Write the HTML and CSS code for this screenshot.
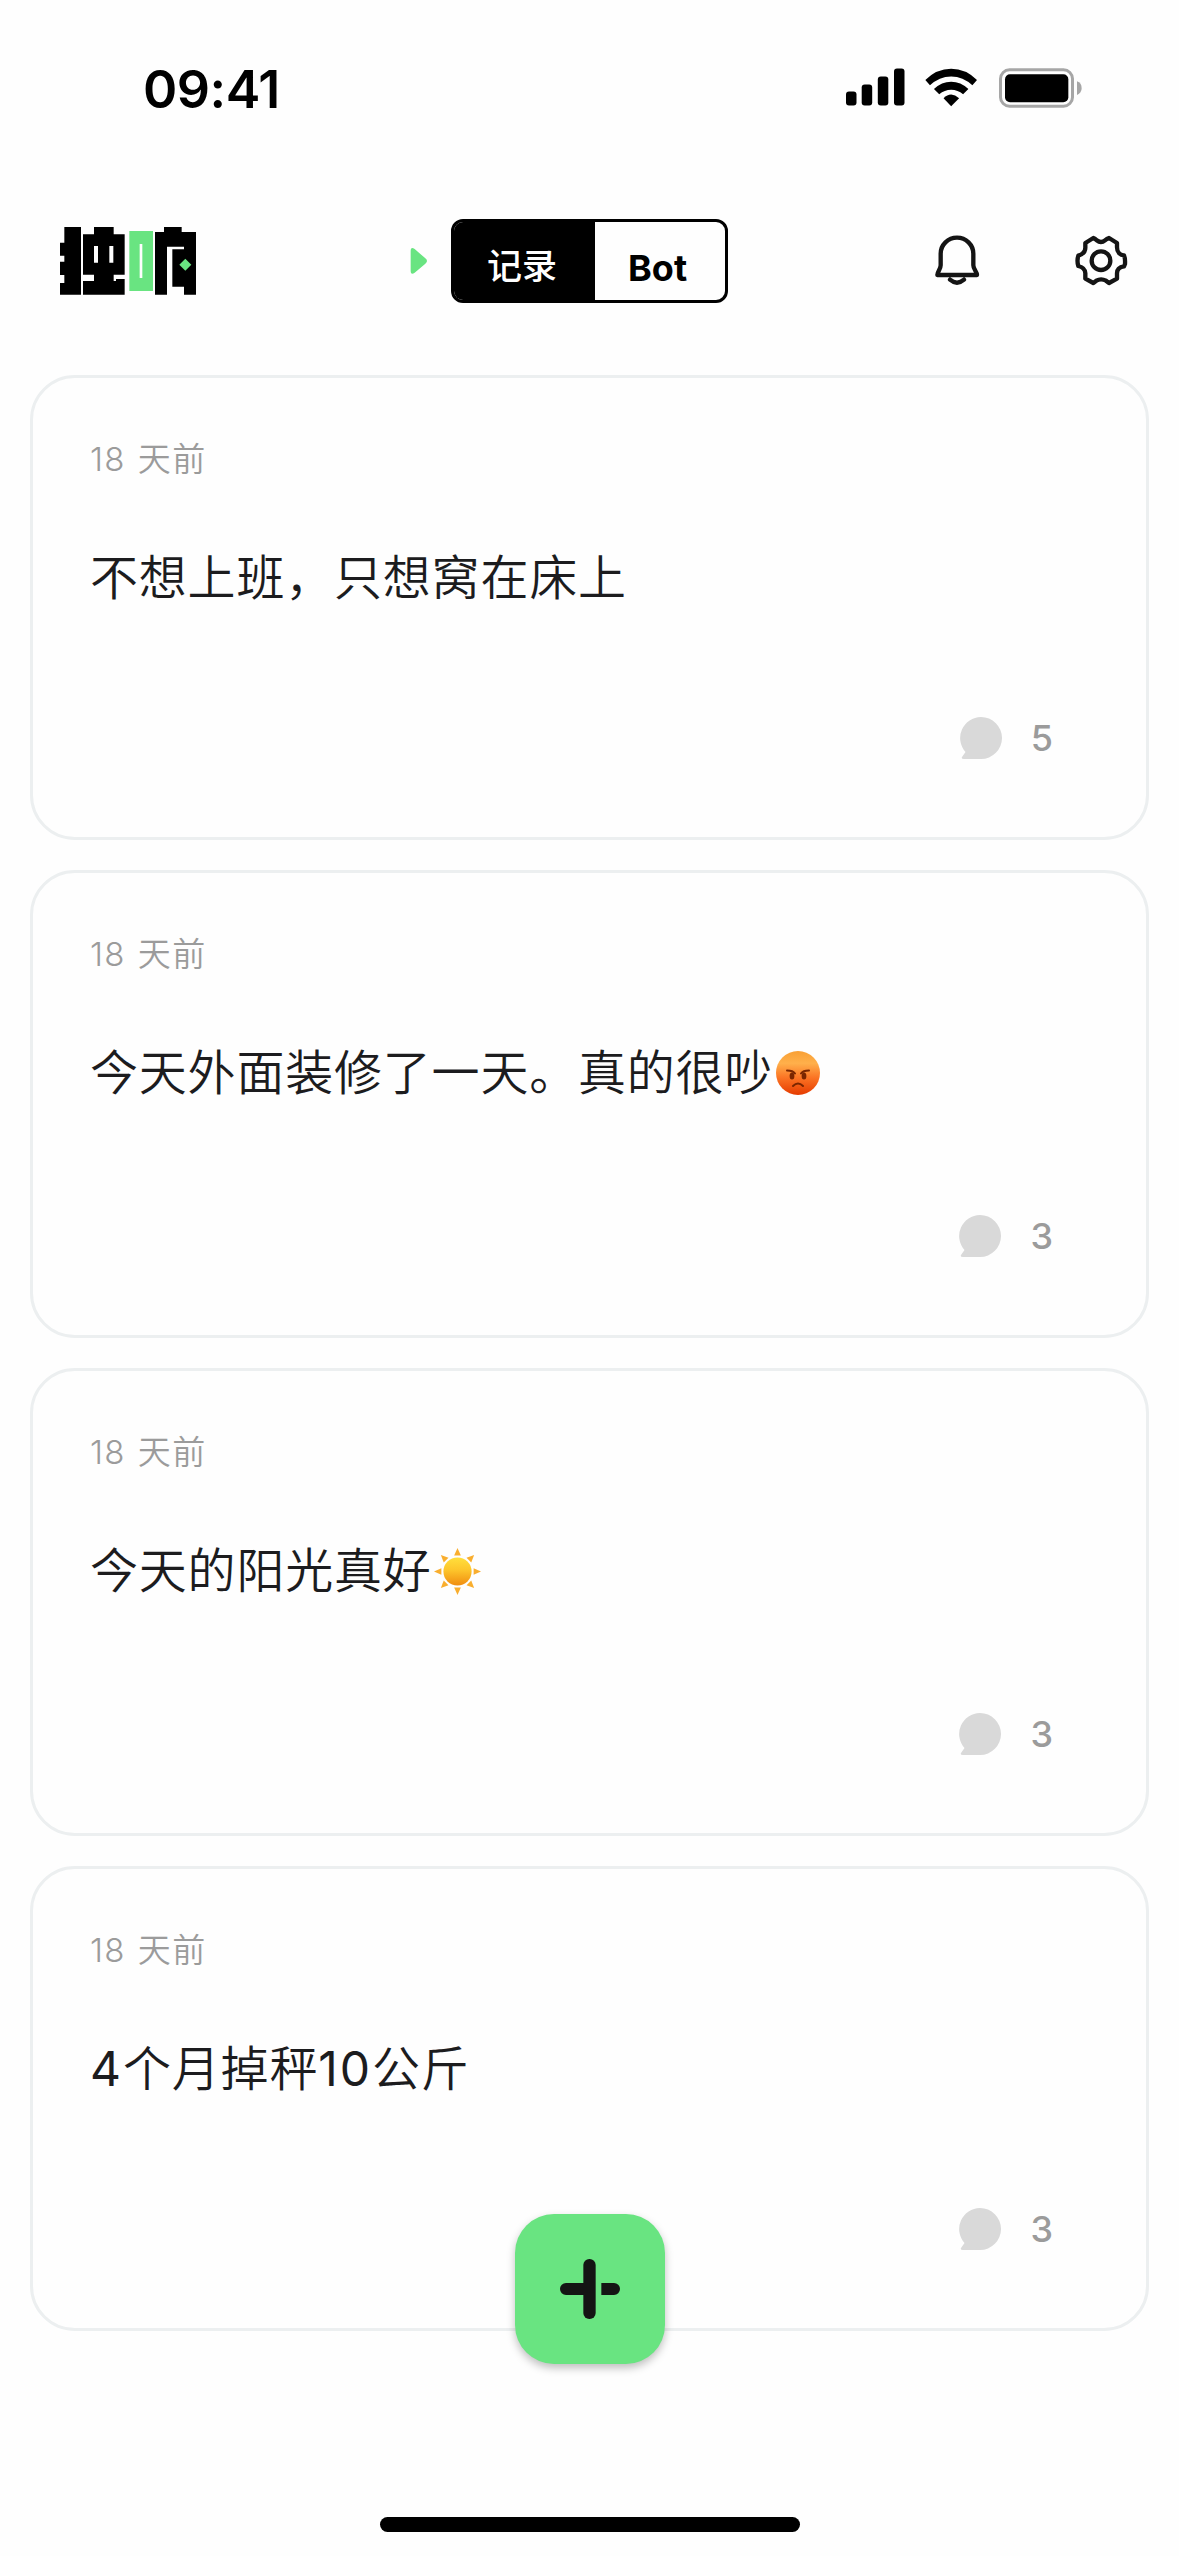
FILE: index.html
```html
<!DOCTYPE html>
<html lang="zh-CN">
<head>
<meta charset="utf-8">
<title>独响</title>
<link rel="stylesheet" href="styles.css">
</head>
<body>
<div class="screen">
  <div class="status">
    <span class="time">09:41</span>
    <svg class="signal" viewBox="0 0 59 38"><rect x="0" y="23.5" width="10.5" height="14" rx="3"/><rect x="15.7" y="16.5" width="10.5" height="21" rx="3"/><rect x="31.8" y="8.5" width="10.5" height="29" rx="3"/><rect x="48" y="0.5" width="10.5" height="37" rx="3"/></svg>
    <svg class="wifi" viewBox="315 84 157 117"><path d="M316 120Q350 86 394 86T472 120L458 136Q430 109 394 109T330 136Z"/><path d="M342 147Q365 125 394 125T446 147L430 163Q414 149 394 149T358 163Z"/><path d="M371 175Q382 164 394 164T418 175L394 199Z"/></svg>
    <svg class="battery" viewBox="537 82 249 120"><rect x="541.5" y="87.500" width="216" height="109" rx="27" fill="none" stroke="#a6a6a6" stroke-width="9"/><rect x="555" y="101" width="190" height="84" rx="15"/><path d="M771 122Q785 127 785 142T771 163Z" fill="#a6a6a6"/></svg>
  </div>
  <header class="topbar">
    <svg class="logo" viewBox="60 48 411 210">
      <path d="M73 51H123V254H60V219H73V195H60V155H73V137H60V98H73Z"/>
      <path fill-rule="evenodd" d="M162 51H221V73H254V194H221V213H228V207H254V254H129V213H162V194H129V73H162ZM162 108V158H174V108ZM208 108V158H220V108Z"/>
      <path class="mint" fill-rule="evenodd" d="M268 63H339V243H268ZM299 102V204H307V102Z"/>
      <path d="M372 51H425V66H468V254H432V230H397V118H432V110H381V254H345V66H372Z"/>
      <path class="mint" d="M436 146L454 164L436 182L418 164Z"/>
    </svg>
    <svg class="arrow mint" viewBox="60 138 54 90"><path d="M62 153Q62 139 74 147L106 175Q116 183 106 191L74 218Q62 226 62 212Z"/></svg>
    <div class="tabs"><span class="tab active">记录</span><span class="tab">Bot</span></div>
    <svg class="bell" viewBox="100 72 144 162"><path d="M123 166V131A49 48 0 0 1 221 131V166C221 178 232 185 232 195H113C113 185 123 178 123 166ZM151 209Q172 227 193 209"/></svg>
    <svg class="gear" viewBox="521 72 162 162"><path d="M579 84Q584 86 589 91Q602 101 614 91Q620 86 626 84L650 99V112C650 128 660 136 671 136Q675 145 674 162L671 169C656 171 650 179 650 190V206L626 219L617 212Q602 204 588 212L579 219L555 206V190C555 178 546 171 534 168Q529 152 534 137C549 132 555 125 555 113V99Z"/><circle cx="602" cy="152" r="28"/></svg>
  </header>
  <main class="feed">
    <article class="card">
      <time class="date">18 天前</time>
      <p class="text">不想上班，只想窝在床上</p>
      <div class="comments"><svg class="bubble" viewBox="0 0 42 42"><path d="M21 0A21 21 0 0 1 21 42H4Q1 42 2 40L5.500 35A21 21 0 0 1 21 0Z"/></svg><span>5</span></div>
    </article>
    <article class="card tall">
      <time class="date">18 天前</time>
      <p class="text">今天外面装修了一天。真的很吵<svg class="emoji angry" viewBox="0 0 44 44"><defs><linearGradient id="face" x1="0" y1="0" x2="0" y2="1"><stop offset="0" stop-color="#f9a035"/><stop offset=".28" stop-color="#ffb04b"/><stop offset=".6" stop-color="#fb7525"/><stop offset="1" stop-color="#e53b00"/></linearGradient></defs><circle cx="22" cy="22" r="22" fill="url(#face)"/><g fill="#7a2600"><ellipse cx="16" cy="25" rx="2.400" ry="3.500"/><ellipse cx="28" cy="25" rx="2.400" ry="3.500"/></g><path d="M11 19.500Q17 19.500 19 22.500M33 19.500Q27 19.500 25 22.500M17 35Q22 30 27 35" fill="none" stroke="#7a2600" stroke-width="2" stroke-linecap="round"/></svg></p>
      <div class="comments"><svg class="bubble" viewBox="0 0 42 42"><path d="M21 0A21 21 0 0 1 21 42H4Q1 42 2 40L5.500 35A21 21 0 0 1 21 0Z"/></svg><span>3</span></div>
    </article>
    <article class="card tall">
      <time class="date">18 天前</time>
      <p class="text">今天的阳光真好<svg class="emoji sun" viewBox="-70 -70 140 140"><defs><linearGradient id="sun" x1="0" y1="0" x2="0" y2="1"><stop offset="0" stop-color="#ffdf3d"/><stop offset=".45" stop-color="#fdc52b"/><stop offset="1" stop-color="#f08c10"/></linearGradient></defs><circle r="42" fill="url(#sun)"/><g fill="#f9ae2e"><path id="ray" d="M-10-48L0-70L10-48Z"/><use href="#ray" transform="rotate(45)"/><use href="#ray" transform="rotate(90)"/><use href="#ray" transform="rotate(135)"/><use href="#ray" transform="rotate(180)"/><use href="#ray" transform="rotate(225)"/><use href="#ray" transform="rotate(270)"/><use href="#ray" transform="rotate(315)"/></g></svg></p>
      <div class="comments"><svg class="bubble" viewBox="0 0 42 42"><path d="M21 0A21 21 0 0 1 21 42H4Q1 42 2 40L5.500 35A21 21 0 0 1 21 0Z"/></svg><span>3</span></div>
    </article>
    <article class="card">
      <time class="date">18 天前</time>
      <p class="text"><span class="num">4</span>个月掉秤<span class="num">10</span>公斤</p>
      <div class="comments"><svg class="bubble" viewBox="0 0 42 42"><path d="M21 0A21 21 0 0 1 21 42H4Q1 42 2 40L5.500 35A21 21 0 0 1 21 0Z"/></svg><span>3</span></div>
    </article>
  </main>
  <button class="add" aria-label="新建"><svg viewBox="0 0 180 180"><rect x="70" y="0" width="37" height="180" rx="18"/><path d="M18 72H75V108H18A18 18 0 0 1 18 72ZM124 72H162A18 18 0 0 1 162 108H124Z"/></svg></button>
  <div class="home"></div>
</div>
</body>
</html>
```
FILE: styles.css
```css
* { box-sizing: border-box; }
body { margin: 0; background: #fff; }
.screen {
  position: relative;
  display: flex;
  flex-direction: column;
  width: 1179px;
  height: 2556px;
  overflow: hidden;
  background: #fefefe;
  color: #1c1c1e;
  font-family: Inter, "Noto Sans CJK SC", sans-serif;
}
svg { display: block; }
.status {
  display: grid;
  grid-template-columns: 703px 79px 74px 83px;
  padding: 68px 0 0 143px;
  height: 219px;
  align-items: start;
}
.time { font-size: 52px; line-height: 43px; font-weight: 600; color: #000; letter-spacing: -0.5px; }
.signal { width: 59px; height: 38px; }
.wifi { width: 52px; height: 39px; }
.battery { width: 83px; height: 40px; }
.topbar {
  display: grid;
  grid-template-columns: 350px 41px 482px 141px auto;
  align-items: center;
  height: 84px;
  padding-left: 60px;
}
.logo { width: 137px; height: 70px; }
.mint { fill: #69e481; }
.arrow { width: 18px; height: 30px; }
.tabs {
  display: flex;
  width: 277px;
  height: 84px;
  border: 3px solid #000;
  border-radius: 12px;
  overflow: hidden;
  color: #000;
  font-size: 36px;
  font-weight: 700;
  line-height: 92px;
}
.tab { flex: 1; padding-left: 33px; }
.tab.active { flex: 0 0 141px; background: #000; color: #fff; font-size: 35px; font-weight: 500; line-height: 88px; }
.bell { width: 48px; height: 54px; }
.gear { width: 54px; height: 54px; }
.bell, .gear { fill: none; stroke: #141414; stroke-width: 13; stroke-linejoin: round; stroke-linecap: round; }
.feed {
  display: flex;
  flex-direction: column;
  gap: 30px;
  padding: 72px 30px 0;
}
.card {
  display: flex;
  flex-direction: column;
  height: 465px;
  padding: 57px 57px 78px;
  border: 3px solid #eceff0;
  border-radius: 45px;
}
.card.tall { height: 468px; }
.date { font-size: 33px; line-height: 48px; font-weight: 350; color: #9b9b9b; letter-spacing: 1.3px; word-spacing: 1.5px; }
.text {
  display: flex;
  align-items: center;
  margin: 59px 0 0;
  font-size: 48px;
  line-height: 72px;
  font-weight: 350;
  letter-spacing: 0.8px;
}
.num { font-weight: 400; letter-spacing: 2px; }
.emoji { flex: none; }
.angry { width: 44px; height: 44px; margin-left: 3px; }
.sun { width: 47px; height: 47px; margin-left: 2px; }
.comments {
  display: flex;
  justify-content: flex-end;
  align-items: center;
  gap: 29px;
  height: 42px;
  margin-top: auto;
  padding-right: 36px;
  font-size: 36px;
  line-height: 45px;
  font-weight: 500;
  color: #9b9b9b;
}
.bubble { width: 42px; height: 42px; fill: #d9d9d9; }
.add {
  position: absolute;
  left: 514.500px;
  top: 2213.500px;
  display: grid;
  place-items: center;
  width: 150px;
  height: 150px;
  padding: 0;
  border: 0;
  border-radius: 39px;
  background: #69e481;
  box-shadow: 0 4px 8px rgba(0, 0, 0, 0.25);
}
.add svg { width: 60px; height: 60px; fill: #141414; }
.home {
  width: 420px;
  height: 15px;
  margin: auto auto 24px;
  border-radius: 8px;
  background: #000;
}
```
